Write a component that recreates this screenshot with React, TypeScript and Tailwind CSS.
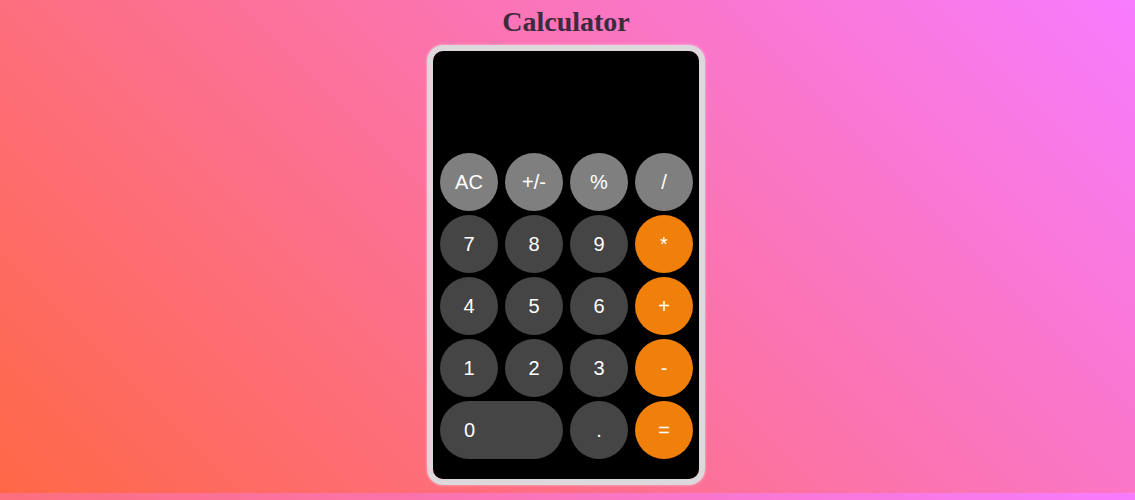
import React from "react";

type Key = { label: string; kind: "fn" | "num" | "op"; wide?: boolean };

const keys: Key[] = [
  { label: "AC", kind: "fn" },
  { label: "+/-", kind: "fn" },
  { label: "%", kind: "fn" },
  { label: "/", kind: "fn" },
  { label: "7", kind: "num" },
  { label: "8", kind: "num" },
  { label: "9", kind: "num" },
  { label: "*", kind: "op" },
  { label: "4", kind: "num" },
  { label: "5", kind: "num" },
  { label: "6", kind: "num" },
  { label: "+", kind: "op" },
  { label: "1", kind: "num" },
  { label: "2", kind: "num" },
  { label: "3", kind: "num" },
  { label: "-", kind: "op" },
  { label: "0", kind: "num", wide: true },
  { label: ".", kind: "num" },
  { label: "=", kind: "op" },
];

const kindClass = {
  fn: "bg-[#7f7f7f]",
  num: "bg-[#454545]",
  op: "bg-[#f0800a]",
};

export default function App() {
  return (
    <div className="w-full h-[500px] bg-[linear-gradient(45deg,#ff6846,#f87cff)] bg-[length:100%_493px] bg-repeat">
      <div className="flex flex-col items-center pt-[6px] pr-[3px]">
        {/* Title */}
        <h1 className="text-[28px] leading-8 font-bold text-[#3d2a3c] font-['Liberation_Serif',serif] mb-[7px]">
          Calculator
        </h1>

        {/* Calculator body */}
        <div className="border-[6px] border-[#dcd8dc] rounded-[16px] shadow-[0_0_3px_rgba(255,255,255,0.6)]">
          <div className="w-[266px] h-[428px] bg-black rounded-[10px] flex flex-col">
            {/* Display */}
            <div className="h-[102px] text-right text-white text-4xl px-3" />

            {/* Keys */}
            <div className="grid grid-cols-[repeat(4,58px)] auto-rows-[58px] gap-x-[7px] gap-y-[4px] pl-[7px]">
              {keys.map((k) => (
                <button
                  key={k.label}
                  type="button"
                  className={`${kindClass[k.kind]} ${
                    k.wide ? "col-span-2 text-left pl-[24px]" : "text-center"
                  } rounded-full text-white text-[20px] font-['Liberation_Sans',Arial,sans-serif]`}
                >
                  {k.label}
                </button>
              ))}
            </div>
          </div>
        </div>
      </div>
    </div>
  );
}
